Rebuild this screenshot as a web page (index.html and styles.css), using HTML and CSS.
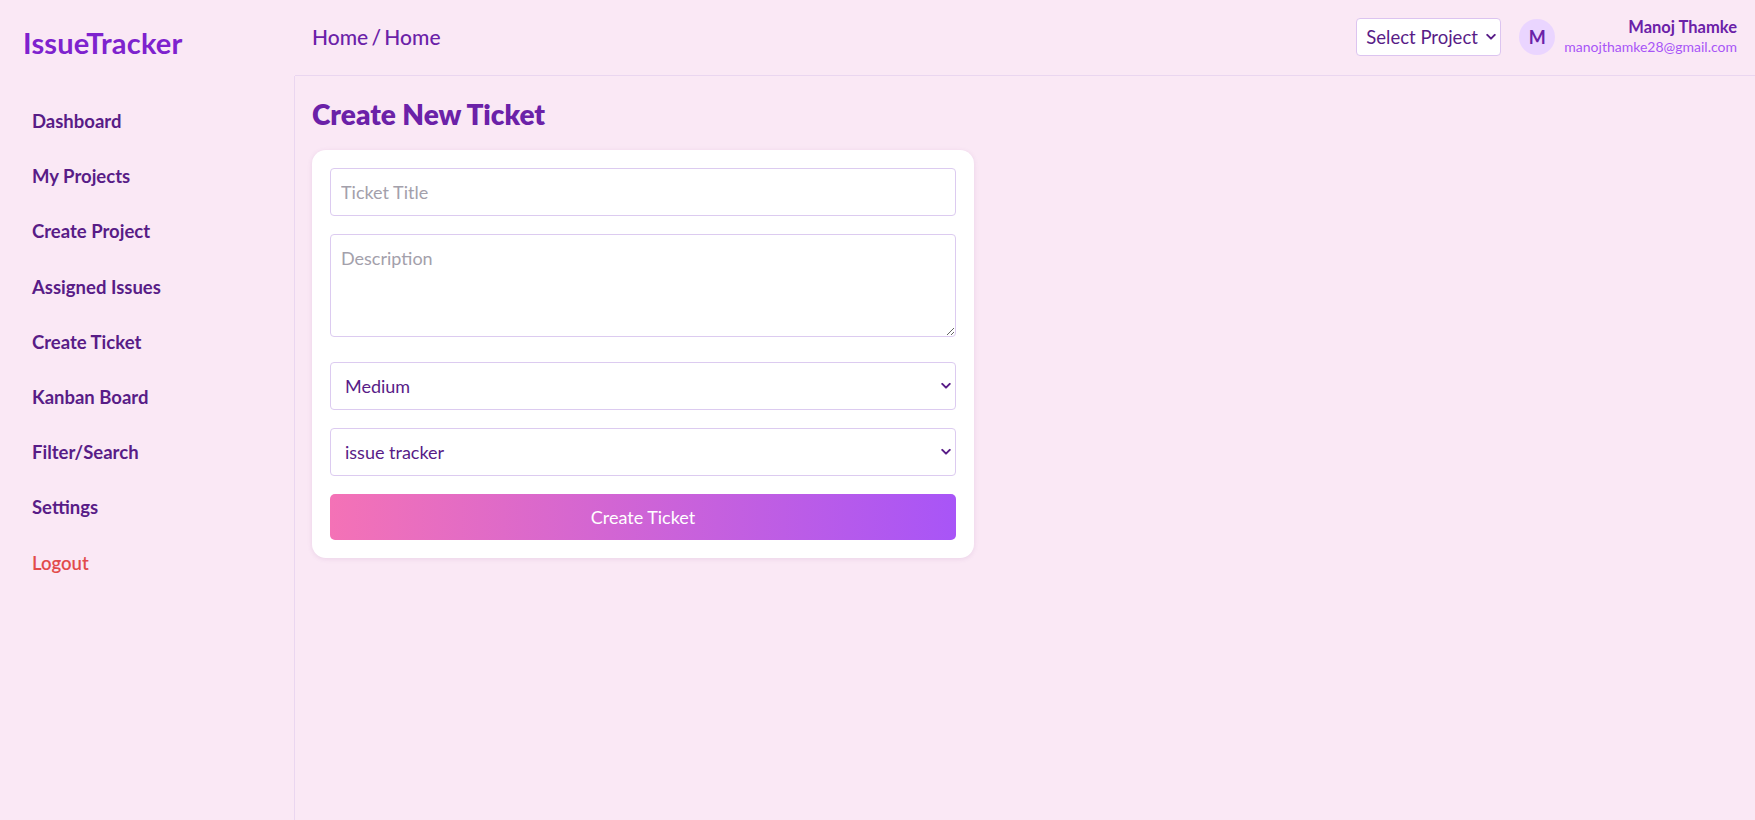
FILE: index.html
```html
<!DOCTYPE html>
<html lang="en">
<head>
<meta charset="utf-8">
<title>IssueTracker</title>
<link rel="stylesheet" href="styles.css">
</head>
<body>
<div class="app">
  <div class="brand">IssueTracker</div>
  <header class="topbar">
    <div class="crumb">Home / Home</div>
    <div class="top-right">
      <div class="select-wrap small">
        <select class="project-select"><option>Select Project</option></select>
        <svg class="chev" viewBox="0 0 12 8" width="10" height="7"><path d="M1.5 1.5 L6 6 L10.5 1.5" fill="none" stroke="currentColor" stroke-width="2.4" stroke-linecap="round" stroke-linejoin="round"/></svg>
      </div>
      <div class="avatar">M</div>
      <div class="user">
        <div class="user-name">Manoj Thamke</div>
        <div class="user-mail">manojthamke28@gmail.com</div>
      </div>
    </div>
  </header>
  <nav class="sidebar">
    <a class="nav-item">Dashboard</a>
    <a class="nav-item">My Projects</a>
    <a class="nav-item">Create Project</a>
    <a class="nav-item">Assigned Issues</a>
    <a class="nav-item">Create Ticket</a>
    <a class="nav-item">Kanban Board</a>
    <a class="nav-item">Filter/Search</a>
    <a class="nav-item">Settings</a>
    <a class="nav-item logout">Logout</a>
  </nav>
  <main class="main">
    <h1 class="title">Create New Ticket</h1>
    <form class="card">
      <input class="field" type="text" placeholder="Ticket Title">
      <textarea class="field area" placeholder="Description"></textarea>
      <div class="select-wrap">
        <select class="field sel"><option>Medium</option></select>
        <svg class="chev" viewBox="0 0 12 8" width="10" height="7"><path d="M1.5 1.5 L6 6 L10.5 1.5" fill="none" stroke="currentColor" stroke-width="2.4" stroke-linecap="round" stroke-linejoin="round"/></svg>
      </div>
      <div class="select-wrap">
        <select class="field sel"><option>issue tracker</option></select>
        <svg class="chev" viewBox="0 0 12 8" width="10" height="7"><path d="M1.5 1.5 L6 6 L10.5 1.5" fill="none" stroke="currentColor" stroke-width="2.4" stroke-linecap="round" stroke-linejoin="round"/></svg>
      </div>
      <button class="submit" type="button">Create Ticket</button>
    </form>
  </main>
</div>
</body>
</html>
```

FILE: styles.css
```css
* { box-sizing: border-box; }
html, body { margin: 0; height: 100%; }
body {
  background: #fae8f5;
  font-family: "Lato", "Open Sans", sans-serif;
  color: #581c87;
}
.app {
  display: grid;
  grid-template-columns: 295px 1fr;
  grid-template-rows: 76px 1fr;
  height: 100vh;
}
.brand {
  padding: 28px 0 0 23px;
  font-size: 29px;
  font-weight: 700;
  color: #7e22ce;
  line-height: 30px;
  letter-spacing: 0.2px;
}
.topbar {
  border-bottom: 1px solid #ead6f0;
  display: flex;
  align-items: center;
  justify-content: space-between;
  padding: 0 18px 0 17px;
}
.crumb {
  font-size: 21px;
  color: #6b21a8;
  font-weight: 500;
  margin-top: -3px;
  word-spacing: -2px;
}
.top-right {
  display: flex;
  align-items: center;
  margin-top: -1px;
}
.select-wrap { position: relative; }
.chev {
  position: absolute;
  right: 5px;
  top: 50%;
  transform: translateY(-50%);
  color: #581c87;
  pointer-events: none;
}
.project-select {
  appearance: none;
  -webkit-appearance: none;
  height: 38px;
  width: 145px;
  padding: 0 22px 0 9px;
  font-family: inherit;
  font-size: 18.5px;
  color: #581c87;
  background: #fff;
  border: 1px solid #dcc4f0;
  border-radius: 4px;
}
.avatar {
  width: 36px;
  height: 36px;
  border-radius: 50%;
  background: #ead5ff;
  color: #6b21a8;
  font-weight: 700;
  font-size: 18px;
  display: flex;
  align-items: center;
  justify-content: center;
  margin-left: 18px;
}
.user {
  margin-left: 9px;
  text-align: right;
  line-height: 1.2;
}
.user-name {
  font-size: 16.5px;
  font-weight: 700;
  color: #6b21a8;
}
.user-mail {
  font-size: 14px;
  color: #a855f7;
  margin-top: 1px;
}
.sidebar {
  border-right: 1px solid #ead6f0;
  padding: 18px;
  display: flex;
  flex-direction: column;
}
.nav-item {
  display: block;
  height: 55.2px;
  line-height: 55.2px;
  padding-left: 14px;
  font-size: 18.5px;
  font-weight: 700;
  color: #581c87;
}
.nav-item.logout {
  color: #e24b4b;
  font-weight: 600;
}
.main {
  padding: 18px 17px;
}
.title {
  margin: 0 0 16px;
  font-size: 28px;
  line-height: 40px;
  font-weight: 800;
  color: #6b21a8;
}
.card {
  width: 662px;
  background: #fff;
  border-radius: 14px;
  box-shadow: 0 1px 5px rgba(120, 60, 140, 0.12);
  padding: 18px;
  display: flex;
  flex-direction: column;
  gap: 18px;
}
.field {
  display: block;
  width: 100%;
  font-family: inherit;
  font-size: 18px;
  color: #581c87;
  background: #fff;
  border: 1px solid #dccbf0;
  border-radius: 4px;
  outline: none;
}
.field::placeholder { color: #a3a0ab; }
input.field {
  height: 48px;
  padding: 0 10px;
}
.area {
  height: 103px;
  padding: 12px 10px;
  resize: vertical;
  margin-bottom: 7px;
}
.sel {
  appearance: none;
  -webkit-appearance: none;
  height: 48px;
  padding: 0 14px;
}
.submit {
  height: 46px;
  border: none;
  border-radius: 5px;
  background: linear-gradient(90deg, #f472b6, #a855f7);
  color: #fff;
  font-family: inherit;
  font-size: 18px;
}
```
